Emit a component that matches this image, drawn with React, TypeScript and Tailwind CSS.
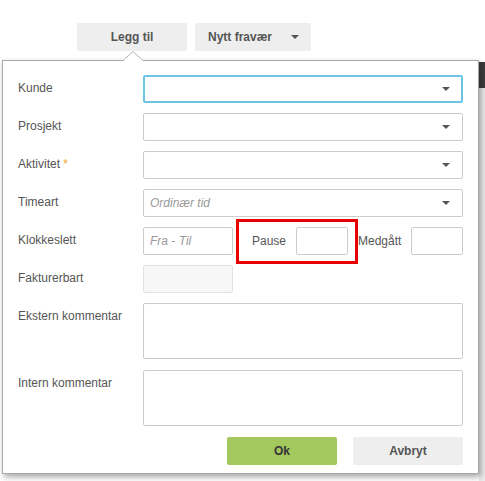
import React from 'react';

const labelCls = 'w-[125px] shrink-0 h-[28px] leading-[27px] text-[12px] text-[#555]';
const inputCls = 'h-[28px] border border-[#cccccc] rounded-[2px] bg-white';

// Small dark caret used in the select boxes
const Caret = () => (
  <svg width="8" height="4" viewBox="0 0 8 4" className="block">
    <path d="M0 0 H8 L4 4 Z" fill="#555" />
  </svg>
);

const SelectBox = ({ focused = false, placeholder }: { focused?: boolean; placeholder?: string }) => (
  <div
    className={
      focused
        ? 'flex-1 h-[28px] rounded-[2px] border-2 border-[#6cc5e6] bg-white flex items-center justify-between pl-[5px] pr-[11px]'
        : 'flex-1 h-[28px] rounded-[2px] border border-[#cccccc] bg-white flex items-center justify-between pl-[6px] pr-[12px]'
    }
  >
    <span className="text-[12px] italic text-[#999]">{placeholder}</span>
    <Caret />
  </div>
);

const Row = ({ label, children }: { label: React.ReactNode; children: React.ReactNode }) => (
  <div className="flex items-start">
    <div className={labelCls}>{label}</div>
    {children}
  </div>
);

export default function App() {
  return (
    <div
      className="relative w-[485px] h-[481px] bg-white overflow-hidden"
      style={{ fontFamily: '"Liberation Sans", Arial, sans-serif' }}
    >
      {/* page behind the popover, peeking out on the right */}
      <div className="absolute right-0 top-[62px] w-[6px] h-[26px] bg-[#3d3d3d]" />
      <div className="absolute right-0 top-[88px] w-[6px] bottom-0 bg-[#ececec]" />

      {/* Top buttons */}
      <div className="flex gap-2 pt-[23px] pl-[77px]">
        <button className="w-[110px] h-[28px] rounded-[2px] bg-[#eeeeee] text-[12px] font-bold text-[#555]">
          Legg til
        </button>
        <button className="w-[116px] h-[28px] rounded-[2px] bg-[#eeeeee] text-[12px] font-bold text-[#555] flex items-center justify-between pl-[13px] pr-[12px]">
          <span>Nytt fravær</span>
          <Caret />
        </button>
      </div>

      {/* Popover panel */}
      <div className="relative ml-[2px] mt-[9px] w-[477px] border border-[#a8a8a8] bg-white shadow-[2px_3px_6px_rgba(0,0,0,0.35)] pt-[14px] pb-[8px] pl-[15px] pr-[15px]">
        {/* notch */}
        <svg width="22" height="11" viewBox="0 0 22 11" className="absolute left-[119px] top-[-10px]">
          <path d="M0 10.5 L11 0.5 L22 10.5" fill="white" stroke="#b5b5b5" strokeWidth="1" />
          <rect x="0" y="10" width="22" height="1" fill="white" />
        </svg>

        <div className="flex flex-col gap-[10px]">
          <Row label="Kunde">
            <SelectBox focused />
          </Row>
          <Row label="Prosjekt">
            <SelectBox />
          </Row>
          <Row
            label={
              <>
                Aktivitet <span className="text-[#f0a030]">*</span>
              </>
            }
          >
            <SelectBox />
          </Row>
          <Row label="Timeart">
            <SelectBox placeholder="Ordinær tid" />
          </Row>
          <Row label="Klokkeslett">
            <div className="relative flex items-center flex-1">
              <div className={`${inputCls} w-[90px] flex items-center pl-[6px]`}>
                <span className="text-[12px] italic text-[#999]">Fra - Til</span>
              </div>
              <span className="ml-[19px] w-[44px] text-[12px] text-[#555]">Pause</span>
              <div className={`${inputCls} w-[52px]`} />
              <span className="ml-[10px] w-[53px] text-[12px] text-[#555]">Medgått</span>
              <div className={`${inputCls} w-[52px]`} />
              {/* red highlight annotation */}
              <div className="absolute left-[93px] top-[-8px] w-[122px] h-[45px] border-[3px] border-[#e80000] pointer-events-none" />
            </div>
          </Row>
          <Row label="Fakturerbart">
            <div className="w-[90px] h-[28px] rounded-[2px] border border-[#e2e2e2] bg-[#f7f7f7]" />
          </Row>
          <Row label="Ekstern kommentar">
            <div className="flex-1 h-[56px] border border-[#cccccc] rounded-[2px] bg-white" />
          </Row>
        </div>

        <div className="mt-[11px]">
          <Row label="Intern kommentar">
            <div className="flex-1 h-[56px] border border-[#cccccc] rounded-[2px] bg-white" />
          </Row>
        </div>

        <div className="flex justify-end gap-4 mt-[11px]">
          <button className="w-[110px] h-[28px] rounded-[2px] bg-[#a2c85e] text-[12px] font-bold text-[#333]">Ok</button>
          <button className="w-[110px] h-[28px] rounded-[2px] bg-[#eeeeee] text-[12px] font-bold text-[#555]">Avbryt</button>
        </div>
      </div>
    </div>
  );
}
